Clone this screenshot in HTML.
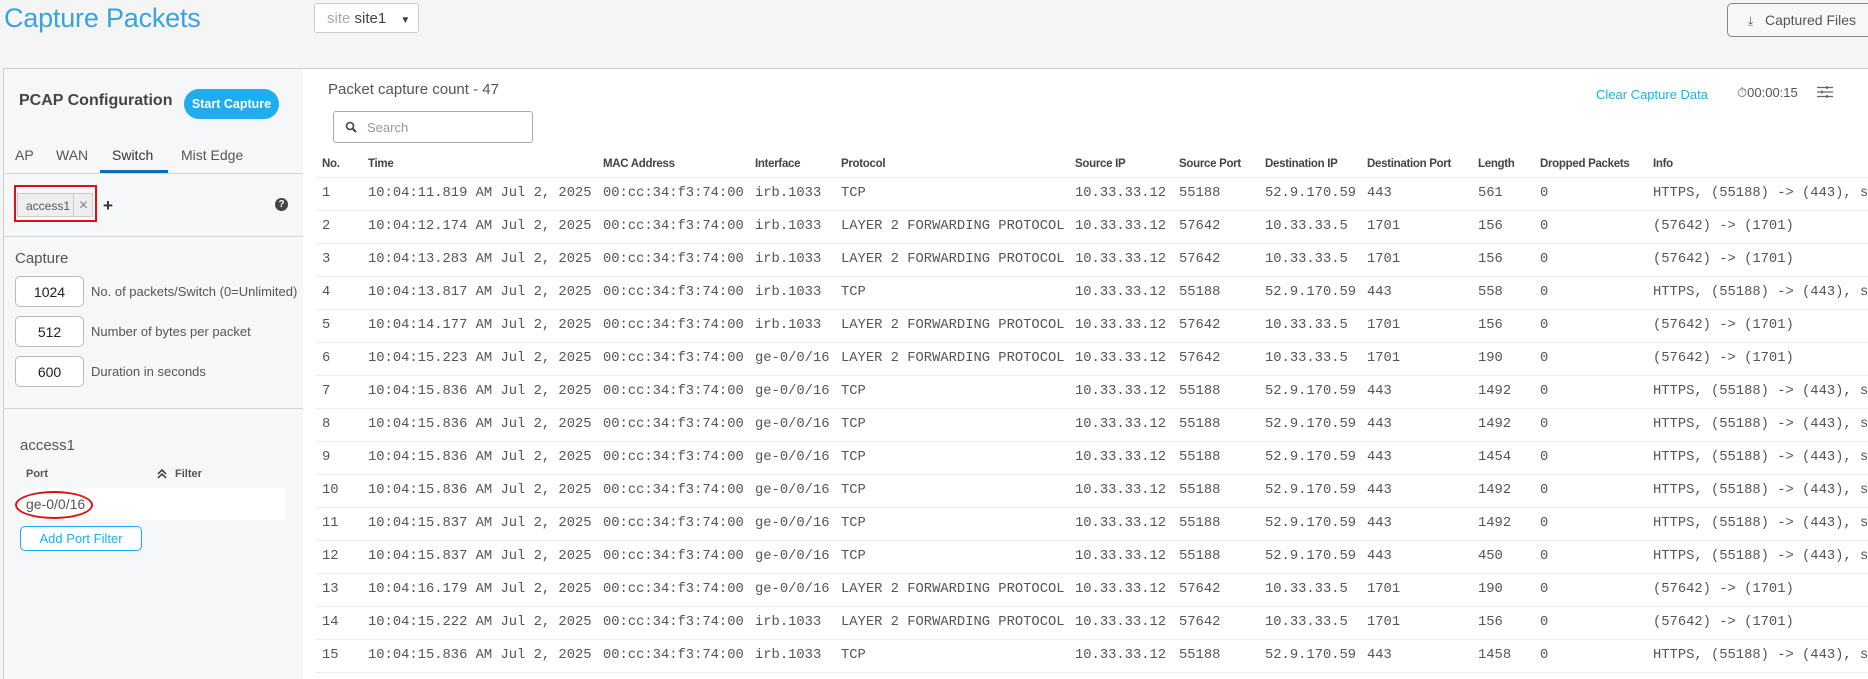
<!DOCTYPE html>
<html style="height:679px;overflow:hidden"><head><meta charset="utf-8">
<style>
*{margin:0;padding:0;box-sizing:border-box}
body{width:1868px;height:679px;overflow:hidden;background:#f5f5f5;font-family:"Liberation Sans",sans-serif;color:#444;position:relative}
.a{position:absolute;white-space:nowrap}
.title{left:4px;top:3px;font-size:27px;color:#3aa3dc;font-weight:300;letter-spacing:-0.2px}
.site{left:314px;top:3px;width:105px;height:30px;border:1px solid #ccc;border-radius:3px;background:#fff;font-size:15px;padding:6px 0 0 12px}
.cf{left:1727px;top:3px;width:150px;height:34px;border:1px solid #888;border-radius:5px;background:#f8f8f8;font-size:14px;padding:8px 0 0 20px;color:#555}
.left{left:3px;top:68px;width:301px;height:611px;background:#f6f7f9;border:1px solid #ccc;border-bottom:none}
.right{left:303px;top:68px;width:1565px;height:611px;background:#fff;border-top:1px solid #ccc}
.hr{position:absolute;height:1px;background:#d4d4d4}
.inp{position:absolute;left:15px;width:69px;height:31px;border:1px solid #bbb;border-radius:5px;background:#fff;font-size:14px;text-align:center;padding-top:7px;color:#222}
.lbl{left:91px;font-size:13px;color:#555}
.th{position:absolute;top:158px;font-size:11.5px;font-weight:bold;color:#444;letter-spacing:-0.3px}
.row{position:absolute;left:316px;width:1552px;height:33px;border-bottom:1px solid #eee;font-family:"Liberation Mono",monospace;font-size:13.8px;color:#555;overflow:hidden}
.row span{position:absolute;top:8px;white-space:nowrap}
</style></head><body>
<div class="a title">Capture Packets</div>
<div class="a site"><span style="color:#aaa">site</span> site1 <span style="font-size:10px;margin-left:10px">&#9660;</span></div>
<div class="a cf"><span style="font-size:12px">&#10515;</span>&nbsp;&nbsp; Captured Files</div>

<div class="a left"></div>
<div class="a" style="left:19px;top:92px;font-size:16px;font-weight:bold;color:#444">PCAP Configuration</div>
<div class="a" style="left:184px;top:89px;width:95px;height:30px;border-radius:15px;background:#1fadef;color:#fff;font-size:12.5px;font-weight:bold;text-align:center;padding-top:8px">Start Capture</div>
<div class="a" style="left:15px;top:147px;font-size:14px;color:#555">AP</div>
<div class="a" style="left:56px;top:147px;font-size:14px;color:#555">WAN</div>
<div class="a" style="left:112px;top:147px;font-size:14px;color:#333">Switch</div>
<div class="a" style="left:181px;top:147px;font-size:14px;color:#555">Mist Edge</div>
<div class="hr" style="left:3px;top:173px;width:300px"></div>
<div class="a" style="left:100px;top:170px;width:68px;height:3px;background:#0a6fb8"></div>
<div class="a" style="left:14px;top:185px;width:83px;height:37px;border:2px solid #e01010"></div>
<div class="a" style="left:17px;top:193px;width:76px;height:24px;background:#eee;border:1px solid #ccc;font-size:12px;padding:5px 0 0 8px;color:#555">access1<span style="position:absolute;left:55px;top:0;width:20px;height:22px;border-left:1px solid #ccc;text-align:center;padding-top:4px;color:#888">&#10005;</span></div>
<div class="a" style="left:103px;top:196px;font-size:17px;font-weight:bold;color:#333">+</div>
<div class="a" style="left:275px;top:198px;width:13px;height:13px;border-radius:50%;background:#444;color:#fff;font-size:10px;font-weight:bold;text-align:center;line-height:13px">?</div>
<div class="hr" style="left:3px;top:236px;width:300px"></div>
<div class="a" style="left:15px;top:250px;font-size:15px;color:#555">Capture</div>
<div class="inp" style="top:276px">1024</div>
<div class="a lbl" style="top:284px">No. of packets/Switch (0=Unlimited)</div>
<div class="inp" style="top:316px">512</div>
<div class="a lbl" style="top:324px">Number of bytes per packet</div>
<div class="inp" style="top:356px">600</div>
<div class="a lbl" style="top:364px">Duration in seconds</div>
<div class="hr" style="left:3px;top:408px;width:300px"></div>
<div class="a" style="left:20px;top:437px;font-size:15px;color:#555">access1</div>
<div class="a" style="left:26px;top:468px;font-size:11px;font-weight:bold;color:#555">Port</div>
<svg class="a" style="left:157px;top:469px" width="10" height="10" viewBox="0 0 10 10"><path d="M1 5 L5 1 L9 5 M1 9 L5 5 L9 9" fill="none" stroke="#333" stroke-width="1.5"/></svg>
<div class="a" style="left:175px;top:468px;font-size:11px;font-weight:bold;color:#555">Filter</div>
<div class="a" style="left:20px;top:488px;width:266px;height:32px;background:#fff"></div>
<div class="a" style="left:15px;top:491px;width:78px;height:28px;border:2px solid #e01010;border-radius:50%"></div>
<div class="a" style="left:26px;top:496px;font-size:14px;color:#555">ge-0/0/16</div>
<div class="a" style="left:20px;top:526px;width:122px;height:25px;border:1px solid #1fadef;border-radius:5px;background:#fff;color:#1fadef;font-size:13px;text-align:center;padding-top:4px">Add Port Filter</div>

<div class="a right"></div>
<div class="a" style="left:328px;top:81px;font-size:15px;color:#555">Packet capture count - 47</div>
<div class="a" style="left:333px;top:111px;width:200px;height:32px;border:1px solid #aaa;border-radius:3px;background:#fff;font-size:13px;color:#999;padding:8px 0 0 33px">Search</div>
<svg class="a" style="left:345px;top:121px" width="12" height="12" viewBox="0 0 12 12"><circle cx="5" cy="5" r="3.5" fill="none" stroke="#444" stroke-width="1.6"/><path d="M7.5 7.5 L11 11" stroke="#444" stroke-width="2"/></svg>
<div class="a" style="left:1596px;top:87px;font-size:13px;color:#1fadef">Clear Capture Data</div>
<div class="a" style="left:1737px;top:85px;font-size:13px;color:#555">&#9201;00:00:15</div>
<svg class="a" style="left:1817px;top:85px" width="16" height="14" viewBox="0 0 16 14"><path d="M0 2.5H16M0 7H16M0 11.5H16" stroke="#666" stroke-width="1.2"/><path d="M10 1V4M5 5.5V8.5M10 10V13" stroke="#666" stroke-width="1.6"/></svg>

<div class="th" style="left:322px">No.</div>
<div class="th" style="left:368px">Time</div>
<div class="th" style="left:603px">MAC Address</div>
<div class="th" style="left:755px">Interface</div>
<div class="th" style="left:841px">Protocol</div>
<div class="th" style="left:1075px">Source IP</div>
<div class="th" style="left:1179px">Source Port</div>
<div class="th" style="left:1265px">Destination IP</div>
<div class="th" style="left:1367px">Destination Port</div>
<div class="th" style="left:1478px">Length</div>
<div class="th" style="left:1540px">Dropped Packets</div>
<div class="th" style="left:1653px">Info</div>
<div class="hr" style="left:316px;top:177px;width:1552px;background:#eee"></div>
<div id="rows"></div>
<script>
var d=[
["1","10:04:11.819 AM Jul 2, 2025","irb.1033","TCP","55188","52.9.170.59","443","561","HTTPS, (55188) -> (443), s"],
["2","10:04:12.174 AM Jul 2, 2025","irb.1033","LAYER 2 FORWARDING PROTOCOL","57642","10.33.33.5","1701","156","(57642) -> (1701)"],
["3","10:04:13.283 AM Jul 2, 2025","irb.1033","LAYER 2 FORWARDING PROTOCOL","57642","10.33.33.5","1701","156","(57642) -> (1701)"],
["4","10:04:13.817 AM Jul 2, 2025","irb.1033","TCP","55188","52.9.170.59","443","558","HTTPS, (55188) -> (443), s"],
["5","10:04:14.177 AM Jul 2, 2025","irb.1033","LAYER 2 FORWARDING PROTOCOL","57642","10.33.33.5","1701","156","(57642) -> (1701)"],
["6","10:04:15.223 AM Jul 2, 2025","ge-0/0/16","LAYER 2 FORWARDING PROTOCOL","57642","10.33.33.5","1701","190","(57642) -> (1701)"],
["7","10:04:15.836 AM Jul 2, 2025","ge-0/0/16","TCP","55188","52.9.170.59","443","1492","HTTPS, (55188) -> (443), s"],
["8","10:04:15.836 AM Jul 2, 2025","ge-0/0/16","TCP","55188","52.9.170.59","443","1492","HTTPS, (55188) -> (443), s"],
["9","10:04:15.836 AM Jul 2, 2025","ge-0/0/16","TCP","55188","52.9.170.59","443","1454","HTTPS, (55188) -> (443), s"],
["10","10:04:15.836 AM Jul 2, 2025","ge-0/0/16","TCP","55188","52.9.170.59","443","1492","HTTPS, (55188) -> (443), s"],
["11","10:04:15.837 AM Jul 2, 2025","ge-0/0/16","TCP","55188","52.9.170.59","443","1492","HTTPS, (55188) -> (443), s"],
["12","10:04:15.837 AM Jul 2, 2025","ge-0/0/16","TCP","55188","52.9.170.59","443","450","HTTPS, (55188) -> (443), s"],
["13","10:04:16.179 AM Jul 2, 2025","ge-0/0/16","LAYER 2 FORWARDING PROTOCOL","57642","10.33.33.5","1701","190","(57642) -> (1701)"],
["14","10:04:15.222 AM Jul 2, 2025","irb.1033","LAYER 2 FORWARDING PROTOCOL","57642","10.33.33.5","1701","156","(57642) -> (1701)"],
["15","10:04:15.836 AM Jul 2, 2025","irb.1033","TCP","55188","52.9.170.59","443","1458","HTTPS, (55188) -> (443), s"]];
var h="";
d.forEach(function(r,i){
var c=[[322,r[0]],[368,r[1]],[603,"00:cc:34:f3:74:00"],[755,r[2]],[841,r[3]],[1075,"10.33.33.12"],[1179,r[4]],[1265,r[5]],[1367,r[6]],[1478,r[7]],[1540,"0"],[1653,r[8]]];
h+='<div class="row" style="top:'+(178+33*i)+'px">';
c.forEach(function(x){h+='<span style="left:'+(x[0]-316)+'px">'+x[1].replace(/>/g,"&gt;")+'</span>';});
h+='</div>';});
document.getElementById("rows").innerHTML=h;
</script>
</body></html>
